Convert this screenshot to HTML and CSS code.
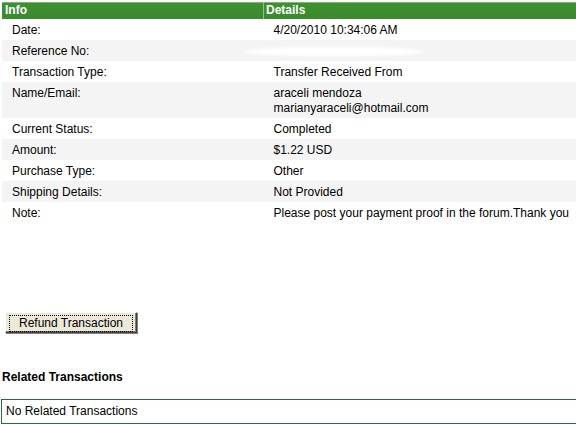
FILE: index.html
```html
<!DOCTYPE html>
<html>
<head>
<meta charset="utf-8">
<link rel="stylesheet" href="styles.css">
</head>
<body>
<div class="page">
  <table class="info">
    <thead>
      <tr><th class="c1">Info</th><th class="c2">Details</th></tr>
    </thead>
    <tbody>
      <tr><td class="k">Date:</td><td class="v">4/20/2010 10:34:06 AM</td></tr>
      <tr class="alt"><td class="k">Reference No:</td><td class="v"><span class="smear"></span></td></tr>
      <tr><td class="k">Transaction Type:</td><td class="v">Transfer Received From</td></tr>
      <tr class="alt"><td class="k">Name/Email:</td><td class="v">araceli mendoza<br>marianyaraceli@hotmail.com</td></tr>
      <tr><td class="k">Current Status:</td><td class="v">Completed</td></tr>
      <tr class="alt"><td class="k">Amount:</td><td class="v">$1.22 USD</td></tr>
      <tr><td class="k">Purchase Type:</td><td class="v">Other</td></tr>
      <tr class="alt"><td class="k">Shipping Details:</td><td class="v">Not Provided</td></tr>
      <tr><td class="k">Note:</td><td class="v nowrap">Please post your payment proof in the forum.Thank you</td></tr>
    </tbody>
  </table>

  <div class="btnrow"><button class="btn"><span class="focus">Refund Transaction</span></button></div>

  <h3 class="related">Related Transactions</h3>
  <div class="relbox">No Related Transactions</div>
</div>
</body>
</html>
```
FILE: styles.css
```css
html, body {
  margin: 0;
  padding: 0;
  overflow: hidden;
  background: #ffffff;
}
body {
  font-family: "Liberation Sans", Arial, sans-serif;
  font-size: 12px;
  color: #000;
}
.page {
  width: 576px;
  overflow: hidden;
  padding-top: 2px;
}
.info {
  border-collapse: collapse;
  margin-left: 2px;
  width: 590px;
}
.info th {
  background: linear-gradient(#77bb66 0, #77bb66 1px, #3f8f33 1px, #3a8a2e 100%);
  color: #fff;
  font-weight: bold;
  text-align: left;
  font-size: 12px;
  height: 17px;
  padding: 0 0 0 3px;
  line-height: 17px;
}
.info th.c1 {
  width: 258px;
  border-right: 1px solid #8cc47e;
}
.info th.c2 {
  padding-left: 2px;
}
.info td {
  padding: 4px 0 2px 10px;
  line-height: 15px;
  vertical-align: top;
}
.info td.v {
  padding-left: 10px;
}
.info tr.alt td {
  background: #f4f4f4;
}
.nowrap { white-space: nowrap; }
.smear {
  display: inline-block;
  width: 180px;
  height: 9px;
  margin-left: -30px;
  margin-top: 3px;
  background: #ffffff;
  border-radius: 50%;
  filter: blur(1.5px);
  vertical-align: top;
}
.btnrow {
  margin-top: 89px;
  padding-left: 5px;
}
.btn {
  font-family: "Liberation Sans", Arial, sans-serif;
  font-size: 12px;
  background: #ece9d8;
  border: 1px solid;
  border-color: #ffffff #404040 #404040 #ffffff;
  box-shadow: inset -1px -1px 0 #808080, 1px 1px 0 #808080;
  padding: 2px 3px;
  height: 21px;
  width: 132px;
  color: #000;
  margin: 0;
}
.focus {
  display: block;
  border: 1px dotted #000;
  line-height: 13px;
  padding: 1px 0;
}
.related {
  font-size: 12px;
  font-weight: bold;
  margin: 37px 0 0 2px;
  line-height: 14px;
}
.relbox {
  margin: 15px 0 0 1px;
  width: 600px;
  height: 23px;
  border: 1px solid #2f6a3a;
  line-height: 23px;
  padding-left: 4px;
}
```
